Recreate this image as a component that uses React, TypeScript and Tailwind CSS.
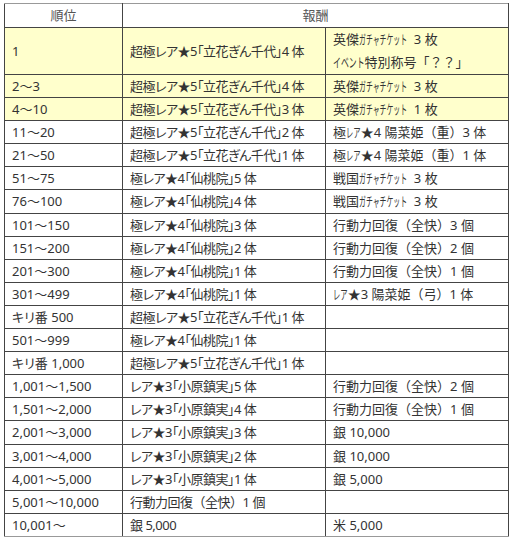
import React from 'react';

// --- Types ---
interface RewardRow {
  rank: string;
  main: string;
  extra: string[];
  highlight?: boolean;
}

const rows: RewardRow[] = [
  { rank: '1', main: '超極レア★5「立花ぎん千代」4 体', extra: ['英傑ガチャチケット\u00a0 3 枚', 'イベント特別称号「？？」'], highlight: true },
  { rank: '2～3', main: '超極レア★5「立花ぎん千代」4 体', extra: ['英傑ガチャチケット\u00a0 3 枚'], highlight: true },
  { rank: '4～10', main: '超極レア★5「立花ぎん千代」3 体', extra: ['英傑ガチャチケット\u00a0 1 枚'], highlight: true },
  { rank: '11～20', main: '超極レア★5「立花ぎん千代」2 体', extra: ['極レア★4 陽菜姫（重）3 体'] },
  { rank: '21～50', main: '超極レア★5「立花ぎん千代」1 体', extra: ['極レア★4 陽菜姫（重）1 体'] },
  { rank: '51～75', main: '極レア★4「仙桃院」5 体', extra: ['戦国ガチャチケット\u00a0 3 枚'] },
  { rank: '76～100', main: '極レア★4「仙桃院」4 体', extra: ['戦国ガチャチケット\u00a0 3 枚'] },
  { rank: '101～150', main: '極レア★4「仙桃院」3 体', extra: ['行動力回復（全快）3 個'] },
  { rank: '151～200', main: '極レア★4「仙桃院」2 体', extra: ['行動力回復（全快）2 個'] },
  { rank: '201～300', main: '極レア★4「仙桃院」1 体', extra: ['行動力回復（全快）1 個'] },
  { rank: '301～499', main: '極レア★4「仙桃院」1 体', extra: ['レア★3 陽菜姫（弓）1 体'] },
  { rank: 'キリ番 500', main: '超極レア★5「立花ぎん千代」1 体', extra: [] },
  { rank: '501～999', main: '極レア★4「仙桃院」1 体', extra: [] },
  { rank: 'キリ番 1,000', main: '超極レア★5「立花ぎん千代」1 体', extra: [] },
  { rank: '1,001～1,500', main: 'レア★3「小原鎮実」5 体', extra: ['行動力回復（全快）2 個'] },
  { rank: '1,501～2,000', main: 'レア★3「小原鎮実」4 体', extra: ['行動力回復（全快）1 個'] },
  { rank: '2,001～3,000', main: 'レア★3「小原鎮実」3 体', extra: ['銀 10,000'] },
  { rank: '3,001～4,000', main: 'レア★3「小原鎮実」2 体', extra: ['銀 10,000'] },
  { rank: '4,001～5,000', main: 'レア★3「小原鎮実」1 体', extra: ['銀 5,000'] },
  { rank: '5,001～10,000', main: '行動力回復（全快）1 個', extra: [] },
  { rank: '10,001～', main: '銀 5,000', extra: ['米 5,000'] },
];

const cell = 'border border-[#444] px-[7px] py-0 leading-[22.1px] align-middle';

const SMALL = 'ァィゥェォッャュョヮ';
const isKata = (ch: string) => ch >= '\u30a1' && ch <= '\u30fa';
const kanaWidth = (ch: string) => (SMALL.includes(ch) ? 4.7 : ch.normalize('NFD').length > 1 ? 9.6 : 7.3);

// a katakana run squeezed to the narrow widths of the source's kana
function NarrowKana({ run }: { run: string }) {
  const full = run.length * 13;
  const target = [...run].reduce((s, ch) => s + kanaWidth(ch), 0);
  return (
    <span
      className="inline-block origin-left [font-feature-settings:normal]"
      style={{ transform: `scaleX(${target / full})`, marginRight: target - full }}
    >
      {run}
    </span>
  );
}

// full-width punctuation keeps its full width (no proportional metrics)
function Txt({ text, narrow }: { text: string; narrow?: boolean }) {
  const wide = narrow ? '（）？～「」' : '（）？～';
  const kind = (ch: string) => (narrow && isKata(ch) ? 'k' : wide.includes(ch) ? 'w' : 'n');
  const parts: { s: string; k: string }[] = [];
  for (const ch of text) {
    const k = kind(ch);
    const last = parts[parts.length - 1];
    if (last && last.k === k) last.s += ch;
    else parts.push({ s: ch, k });
  }
  return (
    <>
      {parts.map((p, i) =>
        p.k === 'k' ? <NarrowKana key={i} run={p.s} /> :
        p.k === 'w' ? <span key={i} className="[font-feature-settings:normal]">{p.s}</span> :
        <span key={i}>{p.s}</span>
      )}
    </>
  );
}

export default function App() {
  return (
    <div className="w-[512px] h-[542px] bg-white pt-[3px] pl-[4px] font-['Noto_Sans','Noto_Sans_CJK_JP',sans-serif] text-[13px] text-[#333] [font-feature-settings:'palt']">
      <table className="w-[504px] border-collapse table-fixed">
        <colgroup>
          <col className="w-[118px]" />
          <col className="w-[203px]" />
          <col className="w-[183px]" />
        </colgroup>
        <thead>
          <tr>
            <th className={`${cell} border-t-[#999] font-normal text-center text-[#555] leading-[23px]`}>順位</th>
            <th colSpan={2} className={`${cell} border-t-[#999] font-normal text-center text-[#555] leading-[23px]`}>報酬</th>
          </tr>
        </thead>
        <tbody>
          {rows.map((r, i) => {
            const last = i === rows.length - 1 ? 'border-b-[#999]' : '';
            return (
              <tr key={i} className={r.highlight ? 'bg-[#ffffcc]' : 'bg-white'}>
                <td className={`${cell} ${last}`}><Txt text={r.rank} /></td>
                <td className={`${cell} whitespace-nowrap tracking-[-0.5px] ${last}`}><Txt text={r.main} /></td>
                <td className={`${cell} whitespace-nowrap ${last}`}>
                  {r.extra.length === 0 ? <span>&nbsp;</span> : r.extra.map((t, j) => (
                    <div key={j} className={r.extra.length > 1 ? 'leading-[23px]' : ''}>
                      <Txt text={t} narrow />
                    </div>
                  ))}
                </td>
              </tr>
            );
          })}
        </tbody>
      </table>
    </div>
  );
}
